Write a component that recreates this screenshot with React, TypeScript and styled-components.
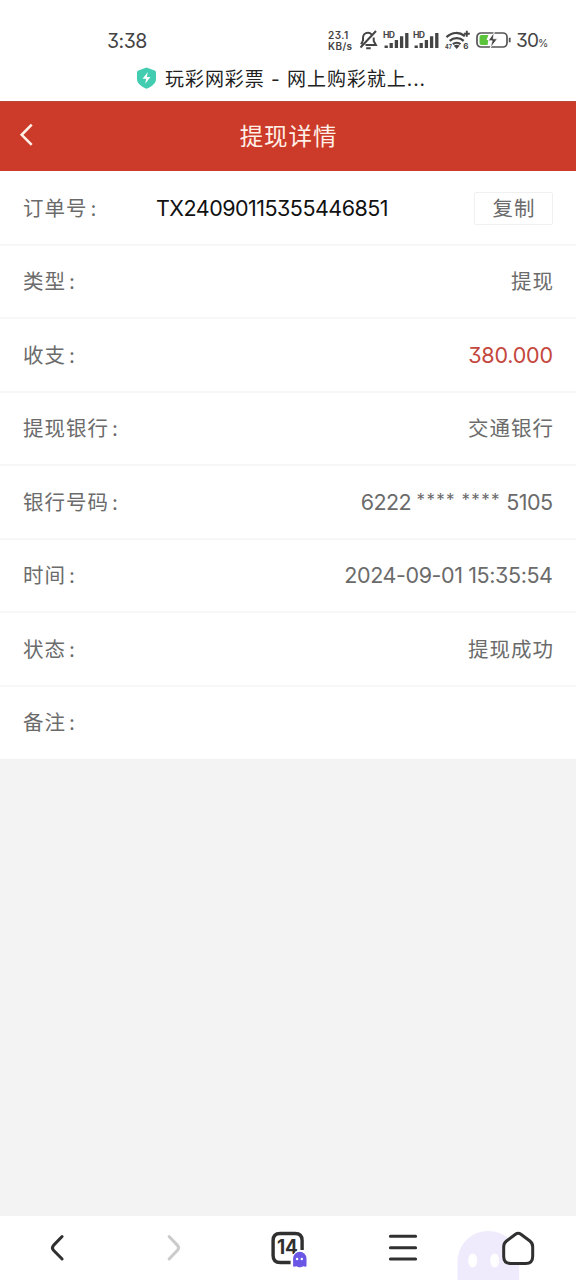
import React from "react";
import styled, { createGlobalStyle } from "styled-components";

const GlobalStyle = createGlobalStyle`
  * { box-sizing: border-box; }
  body { margin: 0; background: #f3f3f3; }
`;

const Screen = styled.div`
  width: 576px;
  height: 1280px;
  display: flex;
  flex-direction: column;
  overflow: hidden;
  background: #f3f3f3;
  color: #6b6b6b;
  font-family: Inter, "Noto Sans CJK SC", sans-serif;
  font-feature-settings: "cv09";
  white-space: nowrap;
`;

const StatusBar = styled.div`
  height: 60px;
  padding: 20px 28px 0 107px;
  display: flex;
  align-items: center;
  background: #fff;
  color: #444;
`;

const Clock = styled.span`
  margin-right: auto;
  font-size: 19.5px;
  line-height: 40px;
  letter-spacing: -0.5px;
  padding-top: 1px;
`;

const StatusIcon = styled.svg<{ $gap?: number }>`
  display: block;
  flex: none;
  overflow: visible;
  margin-left: ${(p) => p.$gap ?? 0}px;
  font-family: Inter, sans-serif;
`;

const NetSpeed = styled.div`
  width: 26px;
  display: flex;
  flex-direction: column;
  padding-top: 2px;
  font-size: 10px;
  font-weight: 600;
  line-height: 11px;
  letter-spacing: 0.4px;
`;

const Percent = styled.span`
  width: 32px;
  margin-left: 4px;
  padding-top: 4px;
  font-size: 19px;
  letter-spacing: -0.9px;
  line-height: 40px;
  small { font-size: 10.5px; }
`;

const PageTitle = styled.div`
  height: 41px;
  padding: 0 0 5px 136px;
  display: flex;
  align-items: center;
  gap: 8px;
  background: #fff;
  color: #222;
  font-size: 19px;
  letter-spacing: 0.95px;
  span { margin-top: -2px; }
`;

const Header = styled.header`
  height: 70px;
  display: grid;
  grid-template-columns: 60px 1fr 60px;
  align-items: center;
  background: #cc3a29;
  border-top: 1px solid #bd4736;
  color: #fff0e8;
`;

const HeaderTitle = styled.h1`
  margin: 0;
  padding-left: 1px;
  text-align: center;
  font-size: 23.5px;
  font-weight: 400;
  line-height: 34px;
  letter-spacing: 0.9px;
`;

const BackIcon = styled.svg`
  display: block;
  margin: -3px 0 0 19px;
`;

const Details = styled.main`
  flex: 1;
  border-top: 1px solid #fff;
`;

const Row = styled.div`
  height: 73.5px;
  padding: 0 23px;
  display: flex;
  align-items: center;
  background: #fff;
  border-bottom: 2px solid #f7f7f7;
  &:last-child {
    height: 72px;
    border-bottom-color: #fff;
  }
`;

const Label = styled.span`
  width: 133px;
  padding-top: 2px;
  font-size: 20.5px;
  line-height: 30px;
  letter-spacing: 1px;
`;

const Colon = styled.span`
  margin-left: 3px;
`;

const Value = styled.span<{ $spacing?: number; $color?: string }>`
  margin-left: auto;
  margin-right: ${(p) => -(p.$spacing ?? 1)}px;
  padding-top: ${(p) => (p.$spacing === undefined ? 2 : 0)}px;
  font-size: ${(p) => (p.$spacing === undefined ? 20.5 : 21.5)}px;
  line-height: 30px;
  letter-spacing: ${(p) => p.$spacing ?? 1}px;
  color: ${(p) => p.$color ?? "inherit"};
`;

const Mask = styled.span`
  font-size: 17px;
  line-height: 20px;
  letter-spacing: 1.35px;
  vertical-align: 4px;
`;

const OrderNumber = styled.span`
  flex: 1;
  padding-top: 1px;
  color: #111;
  font-size: 21.5px;
  line-height: 30px;
  letter-spacing: -0.52px;
`;

const CopyButton = styled.button`
  width: 79px;
  height: 33px;
  margin-top: 2px;
  padding: 1px 0 0 1px;
  border: 1px solid #f0f0f0;
  border-radius: 2px;
  background: #fff;
  color: inherit;
  font: inherit;
  font-size: 20.5px;
  line-height: 28px;
  letter-spacing: 1px;
`;

const NavBar = styled.nav`
  height: 64px;
  display: grid;
  grid-template-columns: repeat(5, 1fr);
  background: #fff;
`;

const NavItem = styled.svg`
  display: block;
  width: 100%;
  height: 64px;
  overflow: hidden;
  font-family: Inter, sans-serif;
`;

const Signal = ({ gap }: { gap: number }) => (
  <StatusIcon $gap={gap} width="26" height="20" viewBox="0 0 26 20">
    <text x="0" y="8" fontSize="8.6" fontWeight="700" fill="#444" textLength="12">HD</text>
    <path d="M3.2 15.5v2.5M8.2 13v5M13.4 10v8M18.6 6.3V18M23.8 3v15" stroke="#444" strokeWidth="3.3" />
  </StatusIcon>
);

type Detail = { label: string; value: React.ReactNode; spacing?: number; color?: string };

const details: Detail[] = [
  { label: "类型", value: "提现" },
  { label: "收支", value: "380.000", spacing: -0.2, color: "#c4473d" },
  { label: "提现银行", value: "交通银行" },
  {
    label: "银行号码",
    value: <>6222 <Mask>****</Mask> <Mask>****</Mask> 5105</>,
    spacing: -0.6,
  },
  { label: "时间", value: "2024-09-01 15:35:54", spacing: -0.4 },
  { label: "状态", value: "提现成功" },
  { label: "备注", value: "" },
];

const ghostBody = "M457 64V46a31 31 0 0 1 62 0v18Z";

export default function App() {
  return (
    <Screen>
      <GlobalStyle />
      <StatusBar>
        <Clock>3:38</Clock>
        <NetSpeed><span>23.1</span><span>KB/s</span></NetSpeed>
        <StatusIcon $gap={5} width="19" height="20" viewBox="0 0 19 20" fill="none" stroke="#444" strokeWidth="2">
          <path d="M17 1 1.5 17.5M4 11V8c0-3 2-5.2 5-5.2 1.5 0 2.7.6 3.5 1.5M14.7 7.5V11l2.2 4H6.5M3.8 11l-1.7 3.2M7.2 18.2h4.5" />
        </StatusIcon>
        <Signal gap={5} />
        <Signal gap={4} />
        <StatusIcon $gap={6} width="26" height="20" viewBox="0 0 26 20" fill="none" stroke="#444" strokeWidth="2.3">
          <path d="M1.5 7.2c5.7-5.4 12.7-5.4 18.4-1M4.7 10.8c4-3.6 10-3.6 14 0M7.9 14.2c2.2-1.9 5.4-1.9 7.6 0" />
          <path d="m8.8 15.8 2.9 3.3 2.9-3.3c-1.6-1.4-4.2-1.4-5.8 0Z" fill="#444" stroke="none" />
          <path d="M18.8 3.7h6M21.8.7v6" strokeWidth="1.9" />
          <text x="0" y="18.8" fontSize="5.5" fontWeight="700" fill="#444" stroke="none">47</text>
          <text x="18.2" y="19" fontSize="8" fontWeight="700" fill="#444" stroke="none">6</text>
        </StatusIcon>
        <StatusIcon $gap={5} width="36" height="18" viewBox="0 0 36 18">
          <rect x="1" y="2" width="30" height="14" rx="4" fill="#fff" stroke="#555" strokeWidth="1.7" />
          <path d="M5.5 4h7l-2 5h2l-1 5h-6A2 2 0 0 1 3.5 12V6a2 2 0 0 1 2-2Z" fill="#5bc43c" />
          <path d="m18.2 1.2-6 8.6h4l-2 7.2 7.2-9.2h-4.2Z" fill="#444" stroke="#fff" strokeWidth=".8" />
          <path d="M33.7 6.7v4.6" stroke="#555" strokeWidth="1.8" />
        </StatusIcon>
        <Percent>30<small>%</small></Percent>
      </StatusBar>
      <PageTitle>
        <svg width="21" height="22" viewBox="0 0 21 22">
          <path d="M10.5.5 18.7 3.6Q20 4.1 20 5.5V12c0 4.5-4.5 7.7-9.5 9.8C5.5 19.7 1 16.5 1 12V5.5q0-1.4 1.3-1.9Z" fill="#43cdb0" />
          <path d="m11.8 5-5.2 6.8h3.5l-.8 5 5.1-6.7h-3.5Z" fill="#fff" />
        </svg>
        <span>玩彩网彩票 - 网上购彩就上...</span>
      </PageTitle>
      <Header>
        <BackIcon width="16" height="24" viewBox="0 0 16 24" fill="none" stroke="#fff0e8" strokeWidth="2.6">
          <path d="M12.7 1.7 2.7 11.8l10 10" />
        </BackIcon>
        <HeaderTitle>提现详情</HeaderTitle>
      </Header>
      <Details>
        <Row>
          <Label>订单号<Colon>:</Colon></Label>
          <OrderNumber>TX24090115355446851</OrderNumber>
          <CopyButton>复制</CopyButton>
        </Row>
        {details.map((d) => (
          <Row key={d.label}>
            <Label>{d.label}<Colon>:</Colon></Label>
            <Value $spacing={d.spacing} $color={d.color}>{d.value}</Value>
          </Row>
        ))}
      </Details>
      <NavBar>
        <NavItem viewBox="0 0 115 64" fill="none" stroke="#303030" strokeWidth="3" strokeLinecap="round">
          <path d="M62 20.5 53.4 29.4q-2.2 2.4 0 4.8L62 43" />
        </NavItem>
        <NavItem viewBox="115 0 115 64" fill="none" stroke="#cbcbcb" strokeWidth="3" strokeLinecap="round">
          <path d="m169 20.5 8.4 8.9q2.2 2.4 0 4.8L169 43" />
        </NavItem>
        <NavItem viewBox="230.4 0 115.2 64">
          <path d="M302.5 34V24.5q0-7-7-7h-15q-7 0-7 7v15q0 7 7 7h10.5" fill="none" stroke="#303030" strokeWidth="3.4" />
          <text x="277.3" y="37.5" fontSize="19.5" fontWeight="700" fill="#303030" textLength="21" lengthAdjust="spacingAndGlyphs">14</text>
          <path d="M293.5 49.5v-7a6.7 6.7 0 0 1 13.4 0v7q0 1.8-2 1-1.3-.8-2.5.2-2.2 1-4.4 0-1.2-1-2.5-.2-2 .8-2-1Z" fill="#6b57e6" stroke="#fff" strokeWidth="2" paintOrder="stroke" />
          <circle cx="297.5" cy="43" r="1.2" fill="#fff" />
          <circle cx="302.2" cy="43" r="1.2" fill="#fff" />
        </NavItem>
        <NavItem viewBox="345.6 0 115.2 64">
          <path d="M390 20.3h25.2M390 31.7h25.2M390 43h25.2" stroke="#303030" strokeWidth="3" strokeLinecap="round" />
          <path d={ghostBody} fill="#efebfd" />
        </NavItem>
        <NavItem viewBox="460.8 0 115.2 64">
          <path d={ghostBody} fill="#efebfd" />
          <ellipse cx="472.5" cy="44.5" rx="4.5" ry="7" fill="#fff" />
          <ellipse cx="494.5" cy="44.5" rx="4.5" ry="7" fill="#fff" />
          <path d="m515.3 18.2-9 6.8q-2.8 2.2-2.8 5.7v9.8q0 7 7 7h15q7 0 7-7v-9.8q0-3.5-2.8-5.7l-9-6.8q-2.7-2-5.4 0Z" fill="#fff" stroke="#303030" strokeWidth="3" />
        </NavItem>
      </NavBar>
    </Screen>
  );
}
